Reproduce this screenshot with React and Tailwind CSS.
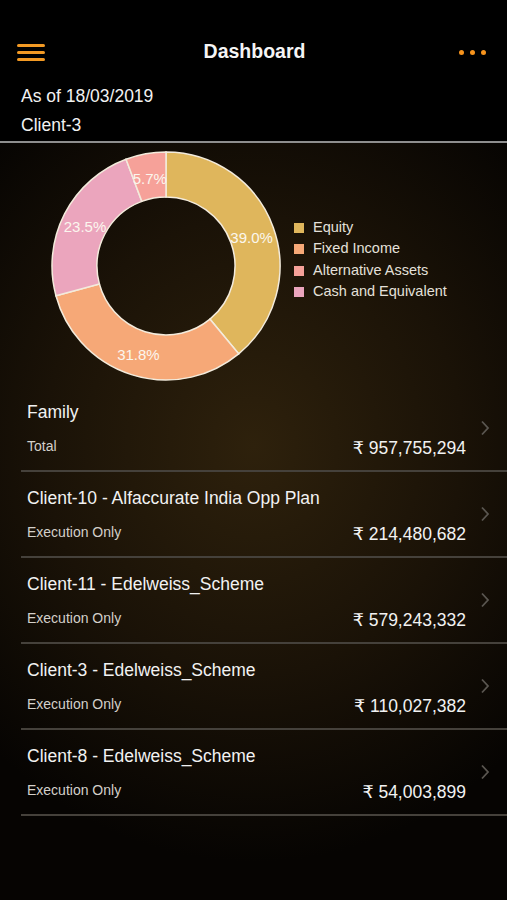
import React from "react";

const slices = [
    { label: "Equity", value: 39.0, color: "#dfb65c" },
    { label: "Fixed Income", value: 31.8, color: "#f6a877" },
    { label: "Cash and Equivalent", value: 23.5, color: "#eba5bd" },
    { label: "Alternative Assets", value: 5.7, color: "#f6a199" },
];

const legend = [
    { label: "Equity", color: "#dfb65c" },
    { label: "Fixed Income", color: "#f6a877" },
    { label: "Alternative Assets", color: "#f6a199" },
    { label: "Cash and Equivalent", color: "#eba5bd" },
];

const rows = [
    { title: "Family", sub: "Total", amount: "957,755,294" },
    { title: "Client-10 - Alfaccurate India Opp Plan", sub: "Execution Only", amount: "214,480,682" },
    { title: "Client-11 - Edelweiss_Scheme", sub: "Execution Only", amount: "579,243,332" },
    { title: "Client-3 - Edelweiss_Scheme", sub: "Execution Only", amount: "110,027,382" },
    { title: "Client-8 - Edelweiss_Scheme", sub: "Execution Only", amount: "54,003,899" },
];

function point(cx, cy, r, a) {
    const rad = (a - 90) * (Math.PI / 180);
    return [cx + r * Math.cos(rad), cy + r * Math.sin(rad)];
}

function Donut() {
    const cx = 120, cy = 120, R = 114, r = 69;
    let start = 0;
    return (
        <svg width="240" height="240" viewBox="0 0 240 240">
            {slices.map((s) => {
                const sweep = (s.value / 100) * 360;
                const end = start + sweep;
                const large = sweep > 180 ? 1 : 0;
                const [x1, y1] = point(cx, cy, R, start);
                const [x2, y2] = point(cx, cy, R, end);
                const [x3, y3] = point(cx, cy, r, end);
                const [x4, y4] = point(cx, cy, r, start);
                const d = `M${x1} ${y1} A${R} ${R} 0 ${large} 1 ${x2} ${y2} L${x3} ${y3} A${r} ${r} 0 ${large} 0 ${x4} ${y4} Z`;
                const [lx, ly] = point(cx, cy, 91, start + sweep / 2);
                start = end;
                return (
                    <g key={s.label}>
                        <path d={d} fill={s.color} stroke="#f3ebdc" strokeWidth="1.5" />
                        <text
                            x={lx}
                            y={ly + 2}
                            textAnchor="middle"
                            dominantBaseline="central"
                            fontSize="15"
                            fill="#fbf6ee"
                            fontFamily="Liberation Sans, sans-serif"
                        >
                            {s.value.toFixed(1)}%
                        </text>
                    </g>
                );
            })}
        </svg>
    );
}

export default function App() {
    return (
        <div className="w-[507px] h-[900px] bg-black flex flex-col overflow-hidden font-[Liberation_Sans,DejaVu_Sans,sans-serif]">
            <header className="bg-black pt-[40px] pb-[4px]">
                <div className="h-[24px] flex items-center justify-between pl-[17px] pr-[21px]">
                    <div className="w-[28px] flex flex-col gap-[4px]">
                        <span className="h-[3px] bg-[#f39a24] rounded-sm"></span>
                        <span className="h-[3px] bg-[#f39a24] rounded-sm"></span>
                        <span className="h-[3px] bg-[#f39a24] rounded-sm"></span>
                    </div>
                    <h1 className="text-[19.5px] font-bold text-[#f5f5f5] ml-[5px]">Dashboard</h1>
                    <div className="flex gap-[6px]">
                        <span className="w-[5px] h-[5px] rounded-full bg-[#f7941d]"></span>
                        <span className="w-[5px] h-[5px] rounded-full bg-[#f7941d]"></span>
                        <span className="w-[5px] h-[5px] rounded-full bg-[#f7941d]"></span>
                    </div>
                </div>
                <p className="mt-[20px] pl-[21px] text-[17.5px] leading-[24px] text-[#f2f2f2]">As of 18/03/2019</p>
                <p className="mt-[5px] pl-[21px] text-[17.5px] leading-[24px] text-[#f2f2f2]">Client-3</p>
            </header>
            <div className="h-[2px] bg-[#8e8e8e]"></div>

            <main className="flex-1 bg-[radial-gradient(ellipse_75%_55%_at_50%_40%,#2e210c_0%,#1a1207_55%,#060402_100%)]">
                <section className="h-[243px] flex items-start">
                    <div className="ml-[46px] mt-[3px]">
                        <Donut />
                    </div>
                    <ul className="ml-[8px] mt-[74px] flex flex-col">
                        {legend.map((l) => (
                            <li key={l.label} className="h-[21.5px] flex items-center gap-[9px]">
                                <span className="w-[10px] h-[10px]" style={{ backgroundColor: l.color }}></span>
                                <span className="text-[14.5px] text-[#e4e0da]">{l.label}</span>
                            </li>
                        ))}
                    </ul>
                </section>

                <div className="ml-[21px]">
                    {rows.map((row) => (
                        <div key={row.title} className="h-[86px] flex border-b-2 border-[#45413b]">
                            <div className="flex-1 pl-[6px] pt-[15px]">
                                <p className="text-[17.5px] leading-[22px] text-[#f2f2f2]">{row.title}</p>
                                <div className="mt-[14px] flex justify-between items-start">
                                    <span className="text-[14px] leading-[18px] text-[#d4d0ca]">{row.sub}</span>
                                    <span className="text-[17.5px] leading-[22px] text-[#f2f2f2]">₹ {row.amount}</span>
                                </div>
                            </div>
                            <div className="w-[41px] flex items-center pl-[14px]">
                                <svg width="10" height="16" viewBox="0 0 10 16">
                                    <path d="M2 1.5 L8 8 L2 14.5" fill="none" stroke="#5a5650" strokeWidth="1.8" />
                                </svg>
                            </div>
                        </div>
                    ))}
                </div>
            </main>
        </div>
    );
}
